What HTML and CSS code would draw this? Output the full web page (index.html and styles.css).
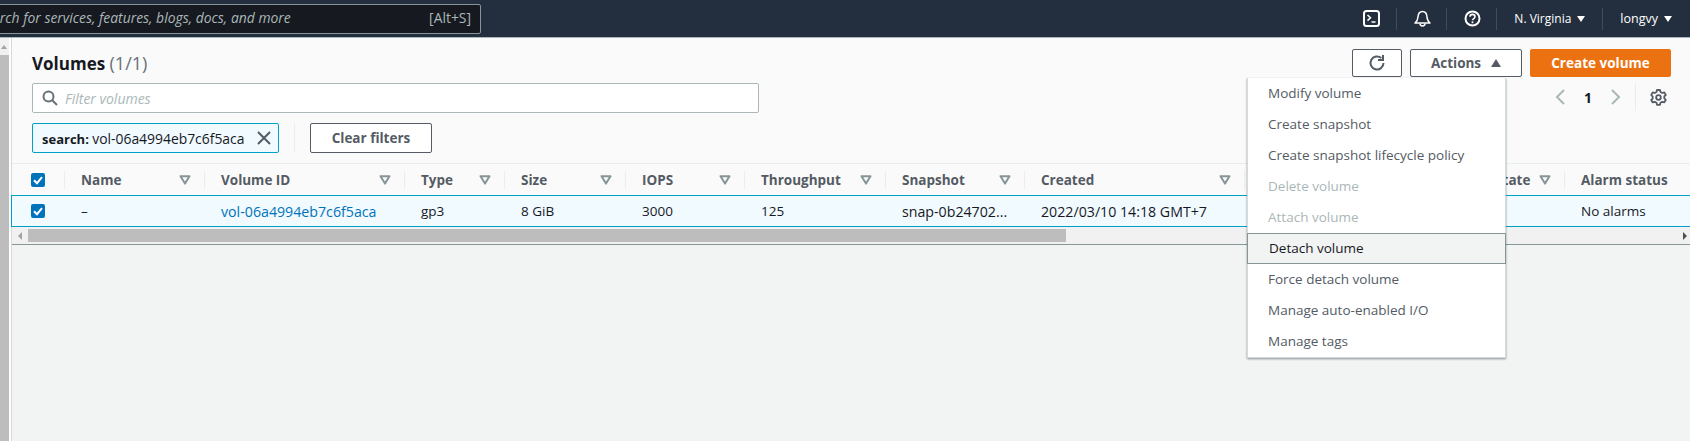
FILE: index.html
```html
<!DOCTYPE html>
<html lang="en">

<head>
  <meta charset="UTF-8">
  <title>Volumes</title>
  <link rel="stylesheet" href="styles.css">
</head>

<body>
  <svg class="defs" width="0" height="0">
    <symbol id="sort" viewBox="0 0 12 10">
      <path d="M1.5 1.2h9L6 8.6z" fill="none" stroke="currentColor" stroke-width="2" stroke-linejoin="round" />
    </symbol>
    <symbol id="check" viewBox="0 0 14 14">
      <rect width="14" height="14" rx="2" fill="#0073bb" />
      <path d="M3 7.2l3 3 5-6" fill="none" stroke="#fff" stroke-width="2" />
    </symbol>
  </svg>

  <header class="topbar">
    <div class="search-box">
      <span class="search-text">Search for services, features, blogs, docs, and more</span>
      <span class="search-key">[Alt+S]</span>
    </div>
    <div class="top-items">
      <span class="top-item icon-item">
        <svg width="17" height="17" viewBox="0 0 17 17">
          <rect x="1" y="1" width="15" height="15" rx="2.5" fill="none" stroke="#fff" stroke-width="2" />
          <path d="M4.5 5l3 2.8-3 2.8M8.5 12h4" fill="none" stroke="#fff" stroke-width="1.5" />
        </svg>
      </span>
      <span class="top-item icon-item">
        <svg width="17" height="17" viewBox="0 0 17 17">
          <path d="M1 13h15c-2-1.500-2.800-3-3-6C12.800 3.500 11 1.500 8.500 1.500S4.200 3.500 4 7c-.2 3-1 4.500-3 6z" fill="none" stroke="#fff" stroke-width="1.500" stroke-linejoin="round" />
          <path d="M6 13.500c0 3.200 5 3.200 5 0" fill="none" stroke="#fff" stroke-width="1.500" />
        </svg>
      </span>
      <span class="top-item icon-item">
        <svg width="17" height="17" viewBox="0 0 17 17">
          <circle cx="8.500" cy="8.500" r="7" fill="none" stroke="#fff" stroke-width="2" />
          <path d="M6 6.800c0-3.200 5-3.200 5 0 0 1.800-2.500 1.700-2.500 3.500" fill="none" stroke="#fff" stroke-width="1.600" />
          <rect x="7.600" y="11.400" width="1.800" height="1.800" fill="#fff" />
        </svg>
      </span>
      <span class="top-item region">N. Virginia <i class="caret"></i></span>
      <span class="top-item user">longvy <i class="caret"></i></span>
    </div>
  </header>

  <div class="page">
    <div class="side-scroll">
      <div class="side-arrow"></div>
      <div class="side-thumb"></div>
    </div>

    <main class="content">
      <div class="panel">
        <div class="panel-head">
          <h1 class="title">Volumes <span class="count">(1/1)</span></h1>
          <div class="actions">
            <button class="btn btn-icon" type="button">
              <svg width="18" height="18" viewBox="0 0 18 18">
                <path d="M15.500 9a6.500 6.500 0 1 1-2.200-4.900" fill="none" stroke="#545b64" stroke-width="2" />
                <path d="M15 1v5h-5" fill="none" stroke="#545b64" stroke-width="2" />
              </svg>
            </button>
            <button class="btn btn-actions" type="button">Actions <i class="caret-up"></i></button>
            <button class="btn btn-primary" type="button">Create volume</button>
          </div>
        </div>

        <div class="filter-row">
          <div class="filter-input">
            <svg width="16" height="16" viewBox="0 0 16 16">
              <circle cx="6.500" cy="6.500" r="5" fill="none" stroke="#687078" stroke-width="2" />
              <path d="M10.200 10.200l4.800 4.800" stroke="#687078" stroke-width="2" />
            </svg>
            <span>Filter volumes</span>
          </div>
          <div class="pager">
            <svg width="10" height="16" viewBox="0 0 10 16"><path d="M9 1L2 8l7 7" fill="none" stroke="#aab7b8" stroke-width="2" /></svg>
            <b>1</b>
            <svg width="10" height="16" viewBox="0 0 10 16"><path d="M1 1l7 7-7 7" fill="none" stroke="#aab7b8" stroke-width="2" /></svg>
            <span class="pager-sep"></span>
            <svg class="gear" width="17" height="17" viewBox="0 0 17 17">
              <circle cx="8.500" cy="8.500" r="2.300" fill="none" stroke="#545b64" stroke-width="1.800" />
              <path d="M7 1h3l.5 2 1.800 1 2-.6 1.500 2.600-1.500 1.400v2l1.500 1.400-1.500 2.600-2-.6-1.800 1-.5 2H7l-.5-2-1.800-1-2 .6L1.200 11l1.500-1.400v-2L1.200 6l1.500-2.600 2 .6 1.800-1z" fill="none" stroke="#545b64" stroke-width="1.800" stroke-linejoin="round" />
            </svg>
          </div>
        </div>

        <div class="token-row">
          <div class="token">
            <span><b>search:</b> <span class="num">vol-06a4994eb7c6f5aca</span></span>
            <svg width="14" height="14" viewBox="0 0 14 14"><path d="M1 1l12 12M13 1L1 13" stroke="#545b64" stroke-width="2" /></svg>
          </div>
          <span class="token-sep"></span>
          <button class="btn btn-clear" type="button">Clear filters</button>
        </div>
      </div>

      <div class="table">
        <div class="cols head-row">
          <div class="check-cell"><svg width="14" height="14"><use href="#check" /></svg></div>
          <div class="th">Name <svg class="sort"><use href="#sort" /></svg></div>
          <div class="th">Volume ID <svg class="sort"><use href="#sort" /></svg></div>
          <div class="th">Type <svg class="sort"><use href="#sort" /></svg></div>
          <div class="th">Size <svg class="sort"><use href="#sort" /></svg></div>
          <div class="th">IOPS <svg class="sort"><use href="#sort" /></svg></div>
          <div class="th">Throughput <svg class="sort"><use href="#sort" /></svg></div>
          <div class="th">Snapshot <svg class="sort"><use href="#sort" /></svg></div>
          <div class="th">Created <svg class="sort"><use href="#sort" /></svg></div>
          <div class="th"></div>
          <div class="th th-state"><span>Volume state</span> <svg class="sort"><use href="#sort" /></svg></div>
          <div class="th">Alarm status</div>
        </div>
        <div class="cols body-row">
          <div class="check-cell"><svg width="14" height="14"><use href="#check" /></svg></div>
          <div class="td">–</div>
          <div class="td num"><a class="link" href="#">vol-06a4994eb7c6f5aca</a></div>
          <div class="td">gp3</div>
          <div class="td">8 GiB</div>
          <div class="td">3000</div>
          <div class="td">125</div>
          <div class="td num">snap-0b24702...</div>
          <div class="td num">2022/03/10 14:18 GMT+7</div>
          <div class="td"></div>
          <div class="td"></div>
          <div class="td">No alarms</div>
        </div>
        <div class="h-scroll">
          <i class="arrow-left"></i>
          <div class="h-thumb"></div>
          <i class="arrow-right"></i>
        </div>
      </div>

      <ul class="menu">
        <li>Modify volume</li>
        <li>Create snapshot</li>
        <li>Create snapshot lifecycle policy</li>
        <li class="off">Delete volume</li>
        <li class="off">Attach volume</li>
        <li class="hover">Detach volume</li>
        <li>Force detach volume</li>
        <li>Manage auto-enabled I/O</li>
        <li>Manage tags</li>
      </ul>
    </main>
  </div>
</body>

</html>
```

FILE: styles.css
```css
* {
  box-sizing: border-box;
}

body {
  margin: 0;
  height: 100vh;
  overflow: hidden;
  display: flex;
  flex-direction: column;
  background-color: #f2f3f3;
  color: #16191f;
  font-family: "Open Sans", sans-serif;
  font-size: 13.5px;
}

.defs {
  position: absolute;
}

/* top bar */
.topbar {
  height: 38px;
  flex-shrink: 0;
  display: flex;
  align-items: center;
  justify-content: space-between;
  background-color: #232f3e;
  border-bottom: 1px solid #aab7b8;
  padding-right: 18px;
}

.search-box {
  width: 511px;
  height: 30px;
  margin-left: -30px;
  display: flex;
  align-items: center;
  justify-content: space-between;
  padding: 0 9px 2px 7px;
  background-color: #16191f;
  border: 1px solid #879596;
  border-radius: 2px;
  color: #aab7b8;
  font-size: 13.9px;
}

.search-text {
  font-style: italic;
}

.top-items {
  display: flex;
  align-items: center;
  color: #fff;
  font-size: 12.5px;
  font-weight: 500;
}

.top-item {
  height: 22px;
  display: flex;
  align-items: center;
  border-left: 1px solid #414d5c;
}

.top-item:first-child {
  border-left: 0;
}

.icon-item {
  width: 50px;
  padding-left: 17px;
}

.top-item:first-child {
  width: 33px;
  padding-left: 0;
}

.region {
  width: 106px;
  padding-left: 17px;
  font-size: 12px;
}

.user {
  padding-left: 17px;
}

.caret {
  display: inline-block;
  margin-left: 6px;
  border-left: 4px solid transparent;
  border-right: 4px solid transparent;
  border-top: 6px solid #fff;
}

/* page */
.page {
  flex: 1;
  display: flex;
  min-height: 0;
}

.side-scroll {
  width: 12px;
  flex-shrink: 0;
  background-color: #fff;
  border-right: 1px solid #d5dbdb;
}

.side-arrow {
  width: 9px;
  height: 17px;
  background-color: #f1f1f1;
  position: relative;
}

.side-arrow::after {
  content: "";
  position: absolute;
  left: 1px;
  top: 7px;
  border-left: 3.5px solid transparent;
  border-right: 3.5px solid transparent;
  border-bottom: 4px solid #a3a3a3;
}

.side-thumb {
  width: 9px;
  height: 100%;
  background-color: #bdbdbd;
}

.content {
  flex: 1;
  min-width: 0;
  position: relative;
}

.panel {
  height: 125px;
  background-color: #fafafa;
  padding: 11px 19px 0 20px;
}

.panel-head {
  display: flex;
  justify-content: space-between;
  align-items: center;
}

.title {
  margin: 0;
  font-size: 17px;
  font-weight: 700;
}

.count {
  font-size: 18px;
  font-weight: 400;
  color: #687078;
}

.actions {
  display: flex;
  gap: 8px;
}

.btn {
  height: 28px;
  display: flex;
  align-items: center;
  justify-content: center;
  background-color: #fff;
  border: 1px solid #545b64;
  border-radius: 2px;
  color: #545b64;
  font-family: inherit;
  font-size: 13.5px;
  font-weight: 700;
  padding: 0;
}

.btn-icon {
  width: 50px;
}

.btn-actions {
  width: 112px;
  gap: 10px;
}

.caret-up {
  border-left: 5.500px solid transparent;
  border-right: 5.500px solid transparent;
  border-bottom: 8px solid #545b64;
}

.btn-primary {
  width: 141px;
  background-color: #ec7211;
  border-color: #ec7211;
  color: #fff;
}

.filter-row {
  margin-top: 6px;
  display: flex;
  justify-content: space-between;
  align-items: center;
}

.filter-input {
  width: 727px;
  height: 30px;
  display: flex;
  align-items: center;
  gap: 7px;
  padding-left: 9px;
  background-color: #fff;
  border: 1px solid #aab7b8;
  border-radius: 2px;
  color: #aab7b8;
  font-size: 14px;
  font-style: italic;
}

.pager {
  display: flex;
  align-items: center;
  gap: 19px;
  margin-right: 4px;
  margin-top: -2px;
  font-size: 14px;
}

.pager-sep {
  width: 1px;
  height: 28px;
  background-color: #eaeded;
  margin: 0 -5px;
}

.token-row {
  margin-top: 10px;
  display: flex;
  align-items: center;
}

.token {
  width: 247px;
  height: 30px;
  display: flex;
  align-items: center;
  justify-content: space-between;
  padding: 0 7px 0 9px;
  background-color: #f1faff;
  border: 1px solid #00a1c9;
  border-radius: 2px;
  font-size: 13px;
  white-space: nowrap;
}

.token .num {
  font-size: 13.900px;
}

.token-sep {
  width: 1px;
  height: 30px;
  margin: 0 15px 0 15px;
  background-color: #eaeded;
}

.btn-clear {
  width: 122px;
  height: 30px;
}

/* table */
.table {
  height: 82px;
  background-color: #fafafa;
  border-top: 1px solid #eaeded;
  border-bottom: 1px solid #879596;
}

.cols {
  display: grid;
  grid-template-columns: 52px 140px 200px 100px 121px 119px 141px 139px 220px 180px 140px 1fr;
  align-items: center;
}

.check-cell {
  padding-left: 19px;
  height: 14px;
}

.check-cell svg {
  display: block;
}

.head-row {
  height: 31px;
  font-weight: 700;
  color: #545b64;
}

.th {
  height: 18px;
  display: flex;
  align-items: center;
  justify-content: space-between;
  white-space: nowrap;
  padding: 0 13px 0 16px;
  border-left: 1px solid #eaeded;
}

.sort {
  width: 12px;
  height: 10px;
  color: #879596;
}

.body-row {
  height: 32px;
  background-color: #f1faff;
  border-top: 1px solid #00a1c9;
  border-bottom: 1px solid #00a1c9;
  border-left: 1px solid #00a1c9;
  margin-left: -1px;
}

.td {
  padding-left: 17px;
  white-space: nowrap;
}

.td.num {
  font-size: 14.200px;
}

.link {
  color: #0073bb;
  text-decoration: none;
}

.h-scroll {
  height: 17px;
  display: flex;
  align-items: center;
  background-color: #f1f1f1;
  padding: 0 3px 0 6px;
  gap: 6px;
}

.h-thumb {
  width: 1038px;
  height: 13px;
  background-color: #bdbdbd;
  margin-right: auto;
}

.arrow-left {
  border-top: 4px solid transparent;
  border-bottom: 4px solid transparent;
  border-right: 4px solid #a3a3a3;
}

.arrow-right {
  border-top: 4px solid transparent;
  border-bottom: 4px solid transparent;
  border-left: 4px solid #505050;
}

/* actions dropdown */
.menu {
  position: absolute;
  left: 1235px;
  top: 40px;
  width: 259px;
  margin: 0;
  padding: 0;
  list-style: none;
  background-color: #fff;
  border: 1px solid #d5dbdb;
  border-top: 0;
  box-shadow: 0 1px 2px rgba(0, 28, 36, 0.45);
  color: #545b64;
}

.menu li {
  height: 31px;
  display: flex;
  align-items: center;
  padding: 0 0 2px 20px;
  border: 1px solid transparent;
  border-left: 0;
  white-space: nowrap;
}

.menu .off {
  color: #aab7b8;
}

.menu .hover {
  margin-left: -1px;
  padding-left: 21px;
  margin-right: -1px;
  background-color: #f2f3f3;
  border: 1px solid #879596;
  color: #16191f;
}
```
